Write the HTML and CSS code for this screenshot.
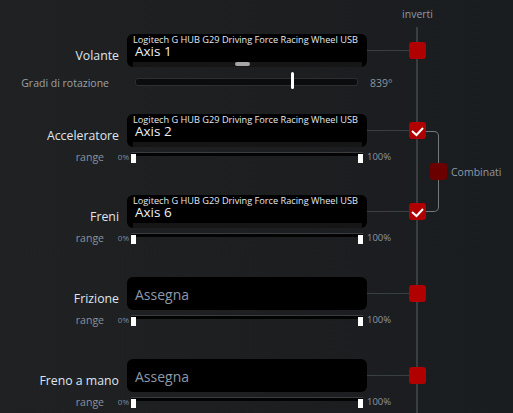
FILE: index.html
```html
<!DOCTYPE html>
<html lang="it">
<head>
    <meta charset="UTF-8">
    <meta name="viewport" content="width=device-width, initial-scale=1.0">
    <title>Assi</title>
    <link rel="stylesheet" href="styles.css">
</head>
<body>
    <div class="panel">
        <div class="head">
            <div class="head-cell"><span class="invert">inverti</span></div>
        </div>

        <div class="section wheel">
            <div class="row">
                <div class="label">Volante</div>
                <div class="field">
                    <div class="device">Logitech G HUB G29 Driving Force Racing Wheel USB</div>
                    <div class="axis">Axis 1</div>
                    <div class="scroll"><span class="scroll-thumb"></span></div>
                </div>
                <div class="link"></div>
                <div class="check"></div>
            </div>
            <div class="rotation">
                <div class="rotation-label">Gradi di rotazione</div>
                <div class="slider">
                    <span class="slider-fill" style="width: 155px"></span>
                    <span class="slider-thumb"></span>
                </div>
                <div class="rotation-value">839°</div>
            </div>
        </div>

        <div class="pair">
            <div class="pair-rows">
                <div class="section first">
                    <div class="row">
                        <div class="label">Acceleratore</div>
                        <div class="field">
                            <div class="device">Logitech G HUB G29 Driving Force Racing Wheel USB</div>
                            <div class="axis">Axis 2</div>
                            <div class="scroll"></div>
                        </div>
                        <div class="link"></div>
                        <div class="check on">
                            <svg viewBox="0 0 17 17"><polyline points="3,9 7.5,13 14,6" /></svg>
                        </div>
                    </div>
                    <div class="range">
                        <div class="range-label">range</div>
                        <div class="pct-min">0%</div>
                        <div class="track"><span class="knob"></span><span class="knob"></span></div>
                        <div class="pct-max">100%</div>
                    </div>
                </div>

                <div class="section">
                    <div class="row">
                        <div class="label">Freni</div>
                        <div class="field">
                            <div class="device">Logitech G HUB G29 Driving Force Racing Wheel USB</div>
                            <div class="axis">Axis 6</div>
                            <div class="scroll"></div>
                        </div>
                        <div class="link"></div>
                        <div class="check on">
                            <svg viewBox="0 0 17 17"><polyline points="3,9 7.5,13 14,6" /></svg>
                        </div>
                    </div>
                    <div class="range">
                        <div class="range-label">range</div>
                        <div class="pct-min">0%</div>
                        <div class="track"><span class="knob"></span><span class="knob"></span></div>
                        <div class="pct-max">100%</div>
                    </div>
                </div>
            </div>

            <div class="combine">
                <div class="brace"></div>
                <div class="combine-box"></div>
                <span class="combine-label">Combinati</span>
            </div>
        </div>

        <div class="section">
            <div class="row">
                <div class="label">Frizione</div>
                <div class="field empty">Assegna</div>
                <div class="link"></div>
                <div class="check"></div>
            </div>
            <div class="range">
                <div class="range-label">range</div>
                <div class="pct-min">0%</div>
                <div class="track"><span class="knob"></span><span class="knob"></span></div>
                <div class="pct-max">100%</div>
            </div>
        </div>

        <div class="section">
            <div class="row">
                <div class="label">Freno a mano</div>
                <div class="field empty">Assegna</div>
                <div class="link"></div>
                <div class="check"></div>
            </div>
            <div class="range">
                <div class="range-label">range</div>
                <div class="pct-min">0%</div>
                <div class="track"><span class="knob"></span><span class="knob"></span></div>
                <div class="pct-max">100%</div>
            </div>
        </div>
    </div>
</body>
</html>
```

FILE: styles.css
```css
html, body {
    height: 100%;
}

body {
    margin: 0;
    font-family: "Open Sans", "Noto Sans", sans-serif;
    background: linear-gradient(to right, #202123, #1c1e20 55%, #1a1d20);
    color: #dde4ec;
    overflow: hidden;
}

.panel {
    height: 100%;
    background: linear-gradient(#3b3e41, #3b3e41) no-repeat 416px 27px / 2px calc(100% - 27px);
}

.head {
    height: 34px;
    display: grid;
    grid-template-columns: 409px 17px;
}

.head-cell {
    grid-column: 2;
    display: flex;
    justify-content: center;
    padding-top: 7px;
}

.invert {
    font-size: 10.5px;
    line-height: 15px;
    color: #8c9aa7;
}

.section {
    height: 82px;
}

.section.wheel {
    height: 80px;
}

.section.first {
    height: 81px;
}

.row {
    display: grid;
    grid-template-columns: 127px 240px 42px 17px;
    align-items: center;
    height: 33px;
}

.label {
    align-self: end;
    text-align: right;
    padding-right: 8px;
    padding-bottom: 3px;
    font-size: 12.3px;
    line-height: 17px;
    color: #dfe6ee;
    white-space: nowrap;
}

.field {
    height: 33px;
    box-sizing: border-box;
    background: #000;
    border-radius: 6px;
    padding: 0 5px 0 6px;
    display: flex;
    flex-direction: column;
    overflow: hidden;
}

.device {
    font-size: 9.2px;
    line-height: 11px;
    color: #e3e9f0;
    white-space: nowrap;
}

.axis {
    font-size: 13.5px;
    line-height: 13px;
    padding-left: 2px;
    color: #eef2f6;
}

.scroll {
    margin-top: auto;
    height: 5px;
    background: #161616;
    display: flex;
    padding-left: 102px;
}

.scroll-thumb {
    width: 15px;
    height: 4px;
    border-radius: 2px;
    background: #a6a6a6;
}

.field.empty {
    display: block;
    padding: 3px 8px 0;
    font-size: 14px;
    line-height: 30px;
    color: #8d99aa;
}

.link {
    height: 1px;
    background: #3b3e41;
}

.check {
    width: 17px;
    height: 17px;
    border-radius: 3px;
    background: #b00000;
}

.check svg {
    display: block;
    width: 17px;
    height: 17px;
    fill: none;
    stroke: #fff;
    stroke-width: 2;
}

.rotation {
    display: flex;
    align-items: center;
    height: 17px;
    margin-top: 6px;
}

.rotation-label {
    width: 109px;
    text-align: right;
    font-size: 10.5px;
    line-height: 14px;
    padding-top: 2px;
    color: #9aa2aa;
    white-space: nowrap;
}

.slider {
    margin-left: 26px;
    width: 223px;
    height: 8px;
    box-sizing: border-box;
    background: #0b0c0d;
    border: 1px solid #2c2e31;
    border-radius: 3px;
    display: flex;
    align-items: center;
}

.slider-fill {
    flex: none;
}

.slider-thumb {
    flex: none;
    width: 3px;
    height: 17px;
    border-radius: 2px;
    background: #fff;
    margin-top: -3px;
}

.rotation-value {
    margin-left: 12px;
    font-size: 10.5px;
    line-height: 14px;
    padding-top: 2px;
    color: #8a949d;
}

.range {
    display: flex;
    align-items: flex-start;
    height: 12px;
    margin-top: 5px;
}

.range-label {
    width: 104px;
    text-align: right;
    font-size: 10.5px;
    line-height: 10px;
    color: #8a939b;
}

.pct-min {
    width: 25px;
    text-align: right;
    font-size: 8px;
    line-height: 10px;
    color: #7f8d9b;
}

.pct-max {
    margin-left: 4px;
    font-size: 9.5px;
    line-height: 10px;
    color: #8a96a2;
}

.track {
    margin-left: 2px;
    width: 232px;
    height: 11px;
    display: flex;
    justify-content: space-between;
    align-items: flex-start;
    background:
        linear-gradient(#3a3c3f, #3a3c3f) no-repeat 0 0 / 100% 1px,
        linear-gradient(#030303, #030303) no-repeat 0 1px / 100% 3px;
}

.knob {
    width: 5px;
    height: 9px;
    margin-top: 2px;
    background: #fff;
}

.pair {
    display: flex;
}

.pair-rows {
    width: 426px;
}

.combine {
    display: flex;
    align-items: center;
    margin-top: 17px;
    height: 81px;
}

.brace {
    width: 13px;
    height: 100%;
    box-sizing: border-box;
    border: 1px solid #75797d;
    border-left: none;
    border-radius: 0 5px 5px 0;
}

.combine-box {
    width: 17px;
    height: 17px;
    margin-left: -9px;
    border-radius: 3px;
    background: #6b0000;
}

.combine-label {
    margin-left: 4px;
    font-size: 10.5px;
    color: #8e9aa6;
}
```
